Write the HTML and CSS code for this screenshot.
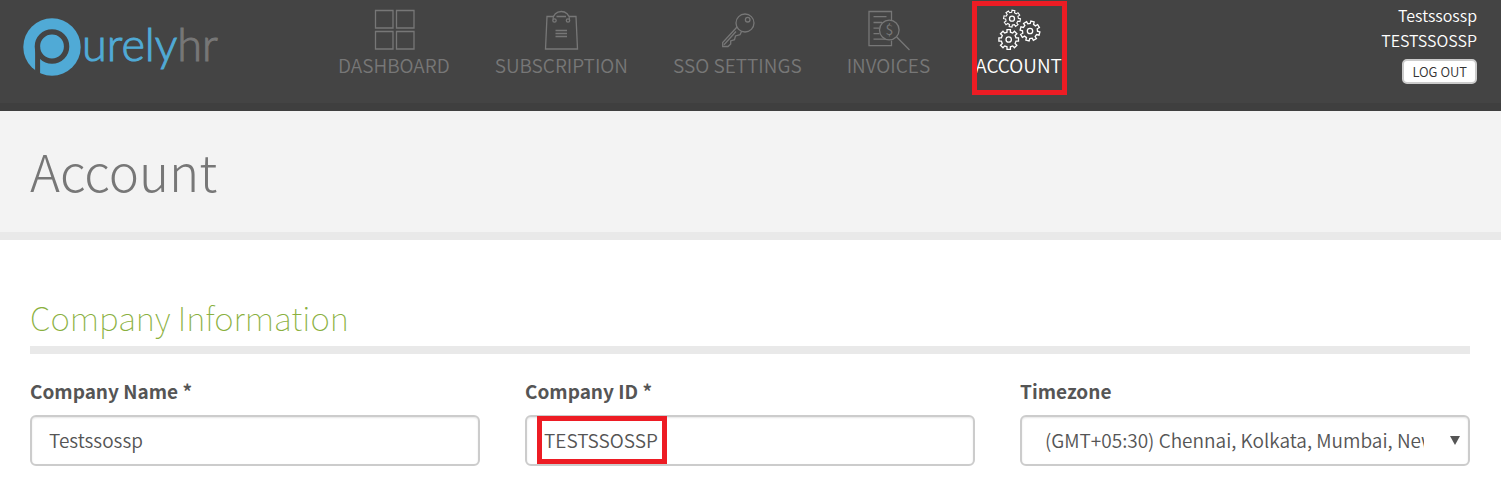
FILE: index.html
```html
<!DOCTYPE html>
<html lang="en">
<head>
  <meta charset="UTF-8">
  <meta name="viewport" content="width=device-width, initial-scale=1.0">
  <title>Account</title>
  <link rel="stylesheet" href="styles.css">
</head>
<body>
  <header class="header">
    <a class="logo" href="#">
      <svg class="logo-mark" viewBox="0 0 58 58" aria-hidden="true">
        <circle cx="29" cy="29" r="28.7" fill="#50aad6"/>
        <circle cx="29" cy="28.5" r="14.6" fill="none" stroke="#444" stroke-width="5.4"/>
        <path d="M14.6 28.5V56" stroke="#444" stroke-width="5"/>
      </svg>
      <span class="logo-text">urely<span class="logo-hr">hr</span></span>
    </a>

    <nav class="nav">
      <a class="nav-item" href="#">
        <svg class="icon" viewBox="0 0 44 42">
          <path d="M3.5 1.5h17.500v17.500h-17.500zM24.500 1.500h17.500v17.500h-17.500zM3.500 22.500h17.500v17.500h-17.500zM24.500 22.500h17.500v17.500h-17.500z"/>
        </svg>
        Dashboard
      </a>
      <a class="nav-item" href="#">
        <svg class="icon" viewBox="0 0 44 42">
          <path d="M14.500 7.500H8L6.500 40h32L37 7.500H30M17.500 7.500h9.500"/>
          <path d="M14 10.500C14 6 17.500 2.500 22.200 2.500S30.500 6 30.500 10.500"/>
          <circle cx="15.500" cy="11.500" r="1.700"/>
          <circle cx="29" cy="11.500" r="1.700"/>
          <path d="M16.500 21.500H28M16.500 24.500H28M16.500 27.500H28"/>
        </svg>
        Subscription
      </a>
      <a class="nav-item" href="#">
        <svg class="icon" viewBox="0 0 44 42">
          <circle cx="30" cy="14" r="9"/>
          <circle cx="32.700" cy="10.700" r="2.300"/>
          <path d="M22 18L7.700 33.500V37.500H13L15.700 35V32L19.500 30.700L20.500 27L25 25.700L26.500 22.500M9 35.800L21 22.500"/>
        </svg>
        SSO Settings
      </a>
      <a class="nav-item" href="#">
        <svg class="icon" viewBox="0 0 44 42">
          <path d="M25.500 11V2.500H3V36.700H25.500V31.500"/>
          <path d="M7.500 7.700H20.500M7.500 13.500H16M7.500 19.200H13.300M7.500 24.700H13.500M7.500 30.200H19"/>
          <circle cx="23.300" cy="21" r="9.800"/>
          <path d="M30.700 28L43.500 41"/>
          <text class="icon-dollar" x="23.300" y="26" text-anchor="middle">$</text>
        </svg>
        Invoices
      </a>
      <a class="nav-item active" href="#">
        <svg class="icon" viewBox="0 0 44 42">
          <defs>
            <path id="gear" d="M7.300-1.700L9.800-1.700V1.700L7.300 1.700L6.400 4L8.200 5.700L5.700 8.200L4 6.400L1.700 7.300V9.800H-1.700V7.300L-4 6.400L-5.700 8.200L-8.200 5.700L-6.400 4L-7.300 1.700H-9.800V-1.700H-7.300L-6.400-4L-8.200-5.700L-5.700-8.200L-4-6.400L-1.700-7.300V-9.800H1.700V-7.300L4-6.400L5.700-8.200L8.200-5.700L6.400-4Z"/>
          </defs>
          <use href="#gear" transform="translate(15 9.700) scale(.85) rotate(10)"/>
          <circle cx="15" cy="9.700" r="2.500"/>
          <use href="#gear" transform="translate(33 22) rotate(15)"/>
          <circle cx="33" cy="22" r="2.700"/>
          <use href="#gear" transform="translate(11.700 30.500)"/>
          <circle cx="11.700" cy="30.500" r="2.700"/>
        </svg>
        Account
      </a>
    </nav>

    <div class="user">
      <span>Testssossp</span>
      <span>TESTSSOSSP</span>
      <button class="logout-btn" type="button">LOG OUT</button>
    </div>
  </header>

  <div class="page-title">
    <h1>Account</h1>
  </div>

  <main class="content">
    <h2>Company Information</h2>
    <form class="fields">
      <div class="field">
        <label for="companyName">Company Name *</label>
        <input type="text" id="companyName" value="Testssossp">
      </div>
      <div class="field">
        <label for="companyId">Company ID *</label>
        <div class="control highlight">
          <input type="text" id="companyId" value="TESTSSOSSP">
        </div>
      </div>
      <div class="field">
        <label for="timezone">Timezone</label>
        <div class="control">
          <select id="timezone">
            <option>(GMT+05:30) Chennai, Kolkata, Mumbai, New Delhi</option>
          </select>
          <svg class="arrow" viewBox="0 0 10 9" aria-hidden="true"><path d="M0 0H10L5 9Z"/></svg>
        </div>
      </div>
    </form>
  </main>
</body>
</html>
```
FILE: styles.css
```css
*,
*::after {
  box-sizing: border-box;
}

body {
  margin: 0;
  background-color: #fff;
  color: #555;
  font-family: "Noto Sans CJK SC", "Open Sans", sans-serif;
  font-weight: 350;
}

.header {
  display: flex;
  align-items: flex-start;
  padding: 0 24px 0 23px;
  background-color: #444;
  border-bottom: 8px solid #3f3f3f;
}

.logo {
  display: flex;
  align-items: center;
  gap: 1px;
  width: 315px;
  padding-top: 18px;
  text-decoration: none;
}

.logo-mark {
  width: 58px;
  height: 58px;
}

.logo-text {
  padding-bottom: 6px;
  color: #50aad6;
  font-family: Lato, sans-serif;
  font-size: 45px;
  font-weight: 300;
  line-height: 52px;
  -webkit-text-stroke: 1px;
}

.logo-hr {
  color: #777;
}

.nav {
  display: flex;
  gap: 45px;
}

.nav-item {
  position: relative;
  display: flex;
  flex-direction: column;
  align-items: center;
  padding: 9px 0 26px;
  color: #777;
  font-size: 19px;
  line-height: 24px;
  text-decoration: none;
  text-transform: uppercase;
}

.nav-item.active {
  color: #fff;
}

.nav-item.active::after {
  content: "";
  position: absolute;
  inset: 1px -5px 8px -3px;
  border: 5px solid #ed1c24;
}

.icon {
  width: 44px;
  height: 42px;
  margin-bottom: 2px;
  fill: none;
  stroke: currentColor;
  stroke-width: 1.3;
}

.icon-dollar {
  fill: currentColor;
  stroke: none;
  font-size: 14px;
  font-weight: 400;
}

.user {
  display: flex;
  flex-direction: column;
  align-items: flex-end;
  margin-left: auto;
  padding-top: 3px;
  color: #fff;
  font-size: 16px;
  line-height: 25px;
}

.logout-btn {
  margin-top: 6px;
  padding: 0 8px;
  background-color: #fff;
  border: 2px solid #ccc;
  border-radius: 5px;
  color: #333;
  font-family: inherit;
  font-size: 13px;
  font-weight: 350;
  line-height: 21px;
  cursor: pointer;
}

.page-title {
  padding: 29px 30px 32px;
  background-color: #f3f3f3;
  border-bottom: 8px solid #e9e9e9;
}

h1 {
  margin: 0;
  color: #777;
  font-size: 51px;
  font-weight: 300;
  line-height: 60px;
}

.content {
  padding: 58px 31px 24px 30px;
}

h2 {
  margin: 0 0 25px;
  padding-bottom: 10px;
  border-bottom: 8px solid #e9e9e9;
  color: #8ab03e;
  font-size: 33px;
  font-weight: 100;
  line-height: 38px;
}

.fields {
  display: grid;
  grid-template-columns: repeat(3, 1fr);
  gap: 45px;
}

.field label {
  display: block;
  margin-bottom: 12px;
  font-size: 19px;
  font-weight: 700;
  line-height: 24px;
}

.control {
  position: relative;
}

.field input,
.field select {
  display: block;
  width: 100%;
  height: 51px;
  padding: 0 17px 2px;
  background-color: #fff;
  border: 2px solid #ccc;
  border-radius: 6px;
  box-shadow: inset 0 1px 2px rgba(0, 0, 0, 0.1);
  color: #555;
  font-family: inherit;
  font-size: 19px;
  font-weight: 350;
}

.field select {
  appearance: none;
  padding: 0 44px 2px 23px;
}

.arrow {
  position: absolute;
  top: 21px;
  right: 10px;
  width: 10px;
  height: 9px;
  fill: #555;
  pointer-events: none;
}

.highlight::after {
  content: "";
  position: absolute;
  top: 1px;
  left: 12px;
  width: 130px;
  height: 48px;
  border: 5px solid #ed1c24;
  pointer-events: none;
}
```
